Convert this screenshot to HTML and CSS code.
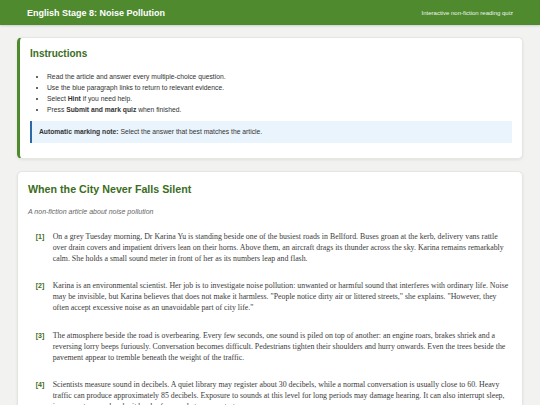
FILE: index.html
```
<!DOCTYPE html>
<html lang="en">
<head>
<meta charset="utf-8">
<title>English Stage 8: Noise Pollution</title>
<link rel="stylesheet" href="styles.css">
</head>
<body>
<header class="topbar">
  <h1 class="topbar-title">English Stage 8: Noise Pollution</h1>
  <span class="topbar-sub">Interactive non-fiction reading quiz</span>
</header>
<main class="page">
  <section class="card card-instructions">
    <h2 class="card-heading">Instructions</h2>
    <ul class="steps">
      <li>Read the article and answer every multiple-choice question.</li>
      <li>Use the blue paragraph links to return to relevant evidence.</li>
      <li>Select <strong>Hint</strong> if you need help.</li>
      <li>Press <strong>Submit and mark quiz</strong> when finished.</li>
    </ul>
    <div class="note"><strong>Automatic marking note:</strong> Select the answer that best matches the article.</div>
  </section>
  <article class="card card-article">
    <h2 class="article-title">When the City Never Falls Silent</h2>
    <p class="article-sub">A non-fiction article about noise pollution</p>
    <div class="para"><span class="para-num">[1]</span><p class="para-text">On a grey Tuesday morning, Dr Karina Yu is standing beside one of the busiest roads in Bellford. Buses groan at the kerb, delivery vans rattle over drain covers and impatient drivers lean on their horns. Above them, an aircraft drags its thunder across the sky. Karina remains remarkably calm. She holds a small sound meter in front of her as its numbers leap and flash.</p></div>
    <div class="para"><span class="para-num">[2]</span><p class="para-text">Karina is an environmental scientist. Her job is to investigate noise pollution: unwanted or harmful sound that interferes with ordinary life. Noise may be invisible, but Karina believes that does not make it harmless. "People notice dirty air or littered streets," she explains. "However, they often accept excessive noise as an unavoidable part of city life."</p></div>
    <div class="para"><span class="para-num">[3]</span><p class="para-text">The atmosphere beside the road is overbearing. Every few seconds, one sound is piled on top of another: an engine roars, brakes shriek and a reversing lorry beeps furiously. Conversation becomes difficult. Pedestrians tighten their shoulders and hurry onwards. Even the trees beside the pavement appear to tremble beneath the weight of the traffic.</p></div>
    <div class="para"><span class="para-num">[4]</span><p class="para-text">Scientists measure sound in decibels. A quiet library may register about 30 decibels, while a normal conversation is usually close to 60. Heavy traffic can produce approximately 85 decibels. Exposure to sounds at this level for long periods may damage hearing. It can also interrupt sleep, increase stress and make it harder for people to concentrate.</p></div>
  </article>
</main>
</body>
</html>
```
FILE: styles.css
```
* { box-sizing: border-box; }
html, body { margin: 0; padding: 0; }
body {
  background: #f2f3f1;
  font-family: "Liberation Sans", Arial, sans-serif;
  color: #333;
}
.topbar {
  height: 25px;
  background: #4f8a2f;
  color: #fff;
  display: flex;
  align-items: center;
  justify-content: space-between;
  padding: 0 27px;
  box-shadow: 0 1px 2px rgba(0,0,0,0.15);
}
.topbar-title {
  margin: 0;
  font-size: 9px;
  font-weight: bold;
}
.topbar-sub {
  font-size: 6px;
  color: #eef5ea;
}
.page {
  padding: 12px 17.5px 0 17px;
  display: flex;
  flex-direction: column;
  gap: 12px;
}
.card {
  background: #fff;
  border-radius: 5px;
  border: 1px solid #e4e6e2;
  box-shadow: 0 1px 3px rgba(0,0,0,0.08);
}
.card-instructions {
  border-left: 3px solid #4f8a2f;
  padding: 10px 10px 15px 10px;
}
.card-heading {
  margin: 0;
  font-size: 10px;
  line-height: 12px;
  color: #3b6d22;
}
.steps {
  margin: 10.5px 0 0 0;
  padding-left: 17px;
  font-size: 6.75px;
  line-height: 11.3px;
  color: #333;
}
.note {
  margin-top: 5.5px;
  background: #eaf4fd;
  border-left: 2px solid #2b6aa6;
  padding: 5.3px 7px;
  font-size: 6.75px;
  line-height: 11.3px;
  color: #333;
}
.card-article {
  padding: 11px 10px 10px 10px;
}
.article-title {
  margin: 0;
  font-size: 10.7px;
  line-height: 13px;
  color: #3b6d22;
}
.article-sub {
  margin: 10px 0 0 0;
  font-size: 7px;
  line-height: 11.2px;
  font-style: italic;
  color: #666;
}
.para {
  display: grid;
  grid-template-columns: 17px 1fr;
  padding: 0 0.5px 0 7.7px;
  margin-top: 13.5px;
}
.para + .para { margin-top: 16.5px; }
.para-num {
  font-size: 7px;
  line-height: 11px;
  font-weight: bold;
  color: #3b6d22;
}
.para-text {
  margin: 0;
  font-family: "Liberation Serif", "Times New Roman", serif;
  font-size: 7.85px;
  line-height: 11px;
  color: #3a3a3a;
}
```
